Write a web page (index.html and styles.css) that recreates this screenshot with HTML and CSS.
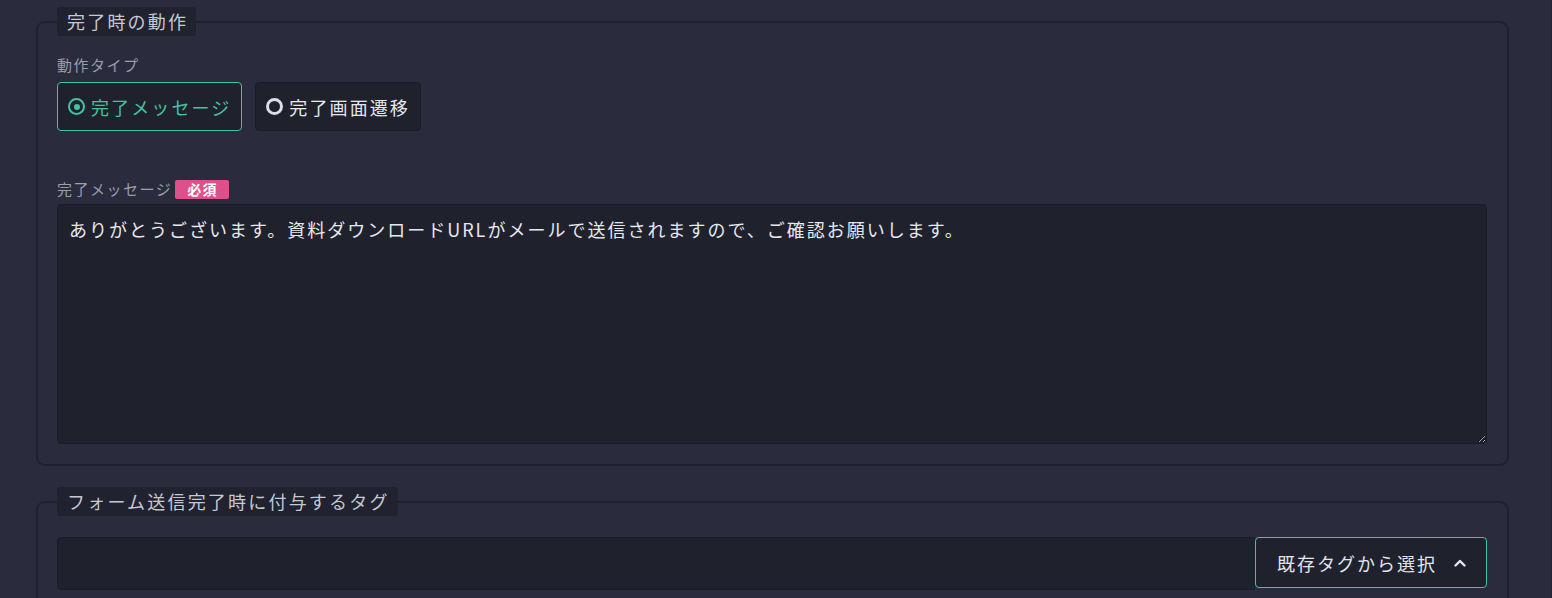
FILE: index.html
```html
<!DOCTYPE html>
<html lang="ja">
<head>
<meta charset="utf-8">
<title>完了時の動作</title>
<link rel="stylesheet" href="styles.css">
</head>
<body>
<div class="page">
  <fieldset class="group">
    <legend class="group-title">完了時の動作</legend>
    <div class="field-label">動作タイプ</div>
    <div class="radio-row">
      <label class="radio-btn is-checked">
        <span class="radio-icon"></span>
        <span class="radio-text">完了メッセージ</span>
      </label>
      <label class="radio-btn">
        <span class="radio-icon"></span>
        <span class="radio-text">完了画面遷移</span>
      </label>
    </div>
    <div class="field-label field-label-msg">完了メッセージ<span class="badge">必須</span></div>
    <textarea class="message">ありがとうございます。資料ダウンロードURLがメールで送信されますので、ご確認お願いします。</textarea>
  </fieldset>

  <fieldset class="group group-tags">
    <legend class="group-title">フォーム送信完了時に付与するタグ</legend>
    <div class="tag-row">
      <div class="tag-input"></div>
      <button class="tag-btn" type="button">
        <span>既存タグから選択</span>
        <svg class="chev" width="14" height="14" viewBox="0 0 14 14"><path d="M2.5 9.5 L7 5 L11.5 9.5" fill="none" stroke="#e6e8ee" stroke-width="2.4" stroke-linecap="round" stroke-linejoin="round"/></svg>
      </button>
    </div>
  </fieldset>
</div>
</body>
</html>
```
FILE: styles.css
```css
* { box-sizing: border-box; }
html, body { margin: 0; padding: 0; background: #2a2c3e; height: 100%; }
body {
  font-family: "Noto Sans CJK JP", "Noto Sans", sans-serif;
  color: #e2e4ea;
  overflow: hidden;
}
.page {
  padding: 7px 42px 0 36px;
  border-right: 1px solid #222433;
  min-height: 100%;
}
.group {
  margin: 0;
  border: 2px solid #1f2130;
  border-radius: 9px;
  padding: 18px 20px 20px 19px;
  min-width: 0;
}
.group-tags { margin-top: 21px; padding-top: 21px; }
.group-title {
  background: #20222f;
  color: #c6c8d2;
  font-size: 18px;
  letter-spacing: 2.2px;
  line-height: 29px;
  height: 29px;
  padding: 0 8px 0 10px;
  border-radius: 3px;
}
.field-label {
  font-size: 15px;
  letter-spacing: 0.1em;
  color: #9a9dab;
  line-height: 22px;
  margin-bottom: 6px;
  display: flex;
  align-items: center;
}
.radio-row { display: flex; gap: 13px; }
.radio-btn {
  display: flex;
  align-items: center;
  gap: 6px;
  height: 49px;
  padding: 0 10px;
  background: #1f212d;
  border: 1px solid #1a1c27;
  border-radius: 4px;
  font-size: 18px;
  letter-spacing: 2.1px;
  color: #e6e8ee;
}
.radio-icon {
  width: 17px;
  height: 17px;
  border-radius: 50%;
  border: 3px solid #dcdee6;
  flex: none;
  position: relative;
}
.radio-btn.is-checked { border-color: #44c39d; color: #44c39d; }
.radio-btn.is-checked .radio-icon { border-color: #44c39d; border-width: 2.5px; }
.radio-btn.is-checked .radio-icon::after {
  content: "";
  position: absolute;
  left: 50%; top: 50%;
  width: 6px; height: 6px;
  margin: -3px 0 0 -3px;
  border-radius: 50%;
  background: #44c39d;
}
.field-label-msg { margin-top: 47px; margin-bottom: 4px; }
.badge {
  margin-left: 3px;
  background: #df4f8a;
  color: #ffffff;
  font-size: 14px;
  font-weight: 700;
  letter-spacing: 0.1em;
  line-height: 19px;
  height: 19px;
  padding: 0 11px 0 12px;
  border-radius: 2px;
}
.message {
  display: block;
  width: 100%;
  height: 240px;
  background: #1f212d;
  border: 1px solid #1a1c27;
  border-radius: 4px;
  color: #e6e8ee;
  font-family: inherit;
  font-size: 18px;
  letter-spacing: 2px;
  line-height: 28px;
  padding: 10px 12px 10px 11px;
  resize: vertical;
  color-scheme: dark;
  outline: none;
}
.tag-row { display: flex; align-items: flex-start; }
.tag-input {
  flex: 1;
  height: 53px;
  background: #1f212d;
  border: 1px solid #1a1c27;
  border-radius: 4px 0 0 4px;
}
.tag-btn {
  display: flex;
  align-items: center;
  gap: 16px;
  width: 232px;
  height: 51px;
  padding: 0 0 0 21px;
  background: #1f212d;
  border: 1px solid #44c39d;
  border-radius: 4px;
  color: #e2e4ea;
  font-family: inherit;
  font-size: 18px;
  letter-spacing: 2px;
}
.chev { flex: none; }
```
